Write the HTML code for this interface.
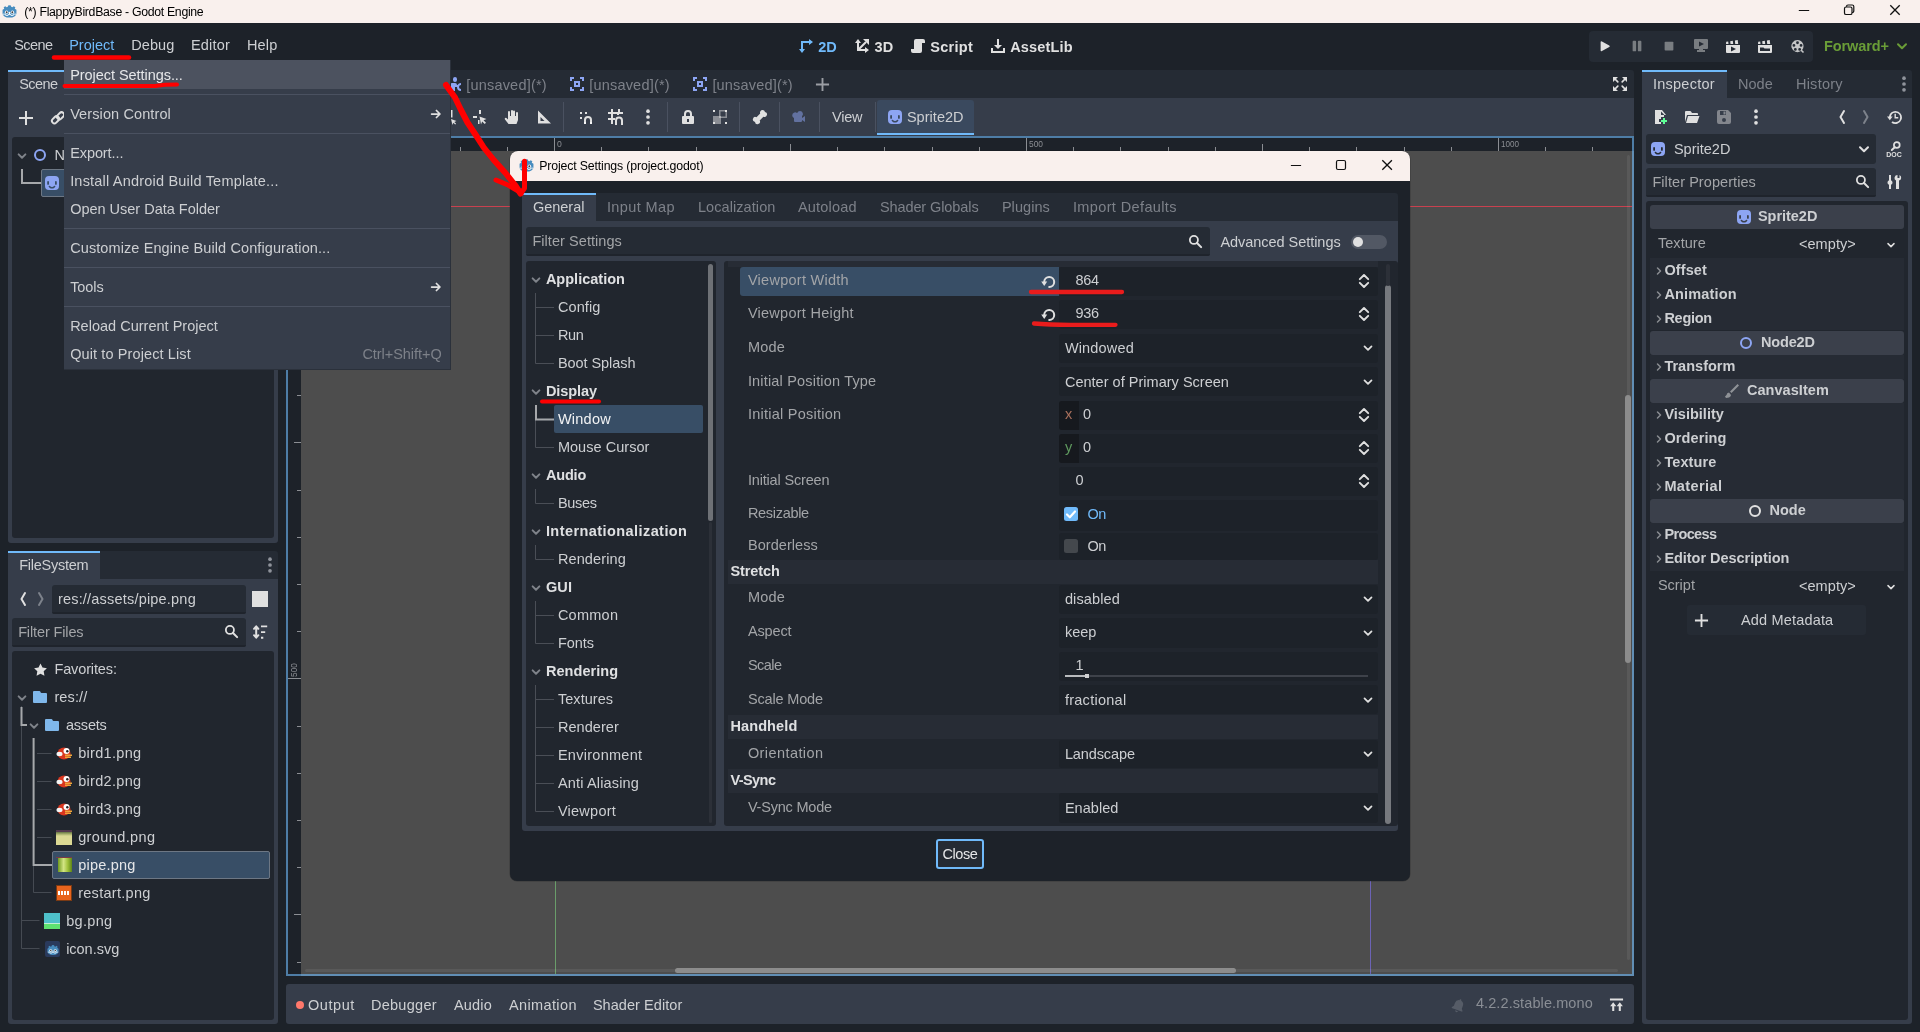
<!DOCTYPE html><html><head><meta charset="utf-8"><title>(*) FlappyBirdBase - Godot Engine</title><style>
html,body{margin:0;padding:0;background:#1d2229;}
body{width:1920px;height:1032px;position:relative;overflow:hidden;font-family:"Liberation Sans",sans-serif;color:#cdcfd2;font-size:14.5px;}
div,span.t,svg{position:absolute;}
span.t{white-space:pre;line-height:20px;}
</style></head><body><div id="root" style="left:0;top:0;width:1920px;height:1032px;will-change:transform;overflow:hidden">
<div style="left:0px;top:0px;width:1920px;height:23px;background:#f9f0ed;"></div>
<svg style="left:2.4px;top:3.5px;" width="15" height="15" viewBox="0 0 16 16"><path fill="#478cbf" d="M8 1.300l1.500.200.300 1.500 1.300.500 1.400-1.100 1.700 1.100-.600 1.600 1.800 1.100v3.300c0 3.300-3.300 5-7.400 5S.600 12.800.600 9.500V6.200l1.800-1.100-.600-1.600 1.700-1.100 1.400 1.100 1.300-.500.300-1.500z"/><circle cx="4.900" cy="8.700" r="1.800" fill="#fff"/><circle cx="11.100" cy="8.700" r="1.800" fill="#fff"/><circle cx="5" cy="8.800" r="1" fill="#414042"/><circle cx="11" cy="8.800" r="1" fill="#414042"/><rect x="7.300" y="8.300" width="1.400" height="2.400" rx=".700" fill="#fff"/><path fill="none" stroke="#fff" stroke-width=".900" d="M1 10.800h3v1.400h2.500v-1h3v1H12v-1.400h3"/></svg>
<span class="t" style="left:24.3px;top:1.74px;font-size:12.3px;letter-spacing:-0.31px;color:#000;">(*) FlappyBirdBase - Godot Engine</span>
<svg style="left:1790px;top:0" width="130" height="23" viewBox="0 0 130 23"><g fill="none" stroke="#111" stroke-width="1.200"><path stroke-width="1" d="M8.800 10.500h10.400"/><rect x="54.500" y="7" width="7.500" height="7.500" rx="1.600"/><path d="M56.500 6.800v-.300a1.500 1.500 0 0 1 1.500-1.500h4.200a1.600 1.600 0 0 1 1.600 1.600v4.400a1.500 1.500 0 0 1-1.500 1.500h-.300"/><path stroke-width="1.300" d="M100.300 5.300l9.400 9.400m0-9.400l-9.400 9.400"/></g></svg>
<span class="t" style="left:14.15px;top:34.98px;font-size:14.5px;letter-spacing:-0.57px;">Scene</span>
<span class="t" style="left:69.15px;top:34.98px;font-size:14.5px;letter-spacing:0.02px;color:#70bafa;">Project</span>
<span class="t" style="left:131.15px;top:34.98px;font-size:14.5px;letter-spacing:0.1px;">Debug</span>
<span class="t" style="left:190.9px;top:34.98px;font-size:14.5px;letter-spacing:0.19px;">Editor</span>
<span class="t" style="left:246.9px;top:34.98px;font-size:14.5px;letter-spacing:0.17px;">Help</span>
<svg style="left:798px;top:38.3px;" width="16" height="16" viewBox="0 0 16 16"><path fill="none" stroke="#70bafa" stroke-width="2" d="M4 12V4h8"/><path fill="#70bafa" d="M1 11h6l-3 4zM11 1l4 3-4 3z"/></svg>
<span class="t" style="left:818.2px;top:36.98px;font-size:14.5px;letter-spacing:0.08px;font-weight:700;color:#70bafa;">2D</span>
<svg style="left:854px;top:38.3px;" width="16" height="16" viewBox="0 0 16 16"><path fill="none" stroke="#e0e0e0" stroke-width="2" d="M4 4v8h8M4 12l8-8"/><path fill="#e0e0e0" d="M1 5l3-4 3 4zM11 9l4 3-4 3zM9 1h6v6z"/></svg>
<span class="t" style="left:874.6px;top:36.98px;font-size:14.5px;letter-spacing:0.03px;font-weight:700;color:#e0e0e0;">3D</span>
<svg style="left:910px;top:38.3px;" width="16" height="16" viewBox="0 0 16 16"><path fill="#e0e0e0" d="M6 1a2 2 0 0 0-2 2v8H1v2a2 2 0 0 0 2 2h7a2 2 0 0 0 2-2V5h3V3a2 2 0 0 0-2-2z"/></svg>
<span class="t" style="left:930.2px;top:36.98px;font-size:14.5px;letter-spacing:0.32px;font-weight:700;color:#e0e0e0;">Script</span>
<svg style="left:990px;top:38.3px;" width="16" height="16" viewBox="0 0 16 16"><path fill="#e0e0e0" d="M7 1v6H4l4 4 4-4H9V1zM1 10v5h14v-5h-2v3H3v-3z"/></svg>
<span class="t" style="left:1010.2px;top:36.98px;font-size:14.5px;letter-spacing:0.16px;font-weight:700;color:#e0e0e0;">AssetLib</span>
<div style="left:1589px;top:31px;width:224px;height:31px;background:#252b34;border-radius:4px;"></div>
<svg style="left:1596.75px;top:38.95px;" width="14.5" height="14.5" viewBox="0 0 16 16"><path d="M4 12.5a1 1 0 0 0 1.5.86l8-4.5a1 1 0 0 0 0-1.72l-8-4.5A1 1 0 0 0 4 3.5z" fill="#e0e0e0"/></svg>
<svg style="left:1630px;top:39.2px;opacity:0.45;" width="14" height="14" viewBox="0 0 16 16"><path d="M3 3a1 1 0 0 1 1-1h2a1 1 0 0 1 1 1v10a1 1 0 0 1-1 1H4a1 1 0 0 1-1-1zm6 0a1 1 0 0 1 1-1h2a1 1 0 0 1 1 1v10a1 1 0 0 1-1 1h-2a1 1 0 0 1-1-1z" fill="#e0e0e0"/></svg>
<svg style="left:1662px;top:39.2px;opacity:0.45;" width="14" height="14" viewBox="0 0 16 16"><rect x="3" y="3" width="10" height="10" rx="1" fill="#e0e0e0"/></svg>
<svg style="left:1693px;top:38.2px;opacity:0.45;" width="16" height="16" viewBox="0 0 16 16"><path fill="#e0e0e0" fill-rule="evenodd" d="M2 1a1 1 0 0 0-1 1v8a1 1 0 0 0 1 1h4v1H4v2h8v-2h-2v-1h4a1 1 0 0 0 1-1V2a1 1 0 0 0-1-1zm4 2.5l5 2.5-5 2.5z"/></svg>
<svg style="left:1725px;top:38.2px;" width="16" height="16" viewBox="0 0 16 16"><path fill="#e0e0e0" fill-rule="evenodd" d="M1 7v7a1 1 0 0 0 1 1h12a1 1 0 0 0 1-1V7zm5 1.500l5 2.500-5 2.500zM1 6h2.500L3.200 3.500l-2 .300zm4.500 0h2.700L7.800 2.800l-2.600.400zm4.700 0h3L12.700 2l-2.800.400z"/></svg>
<svg style="left:1757px;top:38.2px;" width="16" height="16" viewBox="0 0 16 16"><path fill="#e0e0e0" fill-rule="evenodd" d="M1 7v7a1 1 0 0 0 1 1h12a1 1 0 0 0 1-1V7zm2 2.500h3.500l1 1H13V13H3zM1 6h2.500L3.200 3.500l-2 .300zm4.500 0h2.700L7.800 2.800l-2.600.400zm4.700 0h3L12.700 2l-2.800.400z"/></svg>
<svg style="left:1790px;top:38.7px;opacity:0.85;" width="15" height="15" viewBox="0 0 16 16"><path fill="#e0e0e0" fill-rule="evenodd" d="M8 1a6.500 6.500 0 1 0 3.600 11.900l2.200 2.100 1.200-1.200-2.100-2.200A6.500 6.500 0 0 0 8 1zm0 1.500a1.500 1.500 0 1 1 0 3 1.500 1.500 0 0 1 0-3zM4.200 5.300a1.500 1.500 0 1 1 0 3 1.500 1.500 0 0 1 0-3zm7.600 0a1.500 1.500 0 1 1 0 3 1.500 1.500 0 0 1 0-3zM5.700 9.600a1.500 1.500 0 1 1 0 3 1.500 1.500 0 0 1 0-3zm4.600 0a1.500 1.500 0 1 1 0 3 1.500 1.500 0 0 1 0-3z"/></svg>
<span class="t" style="left:1823.9px;top:35.98px;font-size:14.5px;letter-spacing:-0.08px;font-weight:700;color:#6a9d37;">Forward+</span>
<svg style="left:1894px;top:38px;" width="16" height="16" viewBox="0 0 16 16"><path d="M4 6.2l4 4 4-4" fill="none" stroke="#6a9d37" stroke-width="2" stroke-linecap="round" stroke-linejoin="round"/></svg>
<div style="left:8px;top:70px;width:270px;height:28px;background:#252b34;border-radius:3px 3px 0 0;"></div>
<div style="left:8px;top:98px;width:270px;height:445px;background:#363d4a;border-radius:0 0 3px 3px;"></div>
<div style="left:8px;top:70px;width:60px;height:28px;background:#363d4a;"></div>
<div style="left:8px;top:70px;width:60px;height:2px;background:#70bafa;"></div>
<span class="t" style="left:19.15px;top:73.98px;font-size:14.5px;letter-spacing:-0.57px;">Scene</span>
<svg style="left:18px;top:109.5px;" width="16" height="16" viewBox="0 0 16 16"><path d="M7 1v6H1v2h6v6h2V9h6V7H9V1z" fill="#e0e0e0"/></svg>
<svg style="left:50px;top:109.5px;" width="16" height="16" viewBox="0 0 16 16"><g fill="none" stroke="#e0e0e0" stroke-width="2" stroke-linecap="round"><rect x="1.500" y="7.300" width="8" height="5" rx="2.500" transform="rotate(-45 5.500 9.800)"/><rect x="6.500" y="3.300" width="8" height="5" rx="2.500" transform="rotate(-45 10.500 5.800)"/></g></svg>
<div style="left:12px;top:137px;width:262px;height:401px;background:#21262e;border-radius:3px;"></div>
<svg style="left:16px;top:149.5px;" width="12" height="12" viewBox="0 0 16 16"><path d="M3.500 5.800l4.500 4.500 4.500-4.500" fill="none" stroke="#7f838a" stroke-width="2.600" stroke-linecap="round" stroke-linejoin="round"/></svg>
<svg style="left:32px;top:147px;" width="16" height="16" viewBox="0 0 16 16"><circle cx="8" cy="8" r="5" fill="none" stroke="#8da5f3" stroke-width="2"/></svg>
<span class="t" style="left:54.4px;top:144.98px;font-size:14.5px;letter-spacing:0.25px;">Node2D</span>
<div style="left:40.5px;top:169px;width:233px;height:28px;background:#384e66;border-radius:2px;border:1px solid #6d7784;box-sizing:border-box;"></div>
<svg style="left:12px;top:165px" width="40" height="30" viewBox="0 0 40 30"><path d="M10 4v14h19" fill="none" stroke="#a6a8ab" stroke-width="2"/></svg>
<svg style="left:44px;top:175px;" width="16" height="16" viewBox="0 0 16 16"><path fill="#8da5f3" fill-rule="evenodd" d="M5 1a4 4 0 0 0-4 4v6a4 4 0 0 0 4 4h6a4 4 0 0 0 4-4V5a4 4 0 0 0-4-4zM4.100 6a.900.900 0 0 1 .900.900v2a.900.900 0 0 1-1.800 0v-2A.900.900 0 0 1 4.100 6zm7.800 0a.900.900 0 0 1 .900.900v2a.900.900 0 0 1-1.800 0v-2a.900.900 0 0 1 .900-.900zM4.700 11.700a.750.750 0 0 1 1.300-.700c.900 1.300 3.100 1.300 4 0a.750.750 0 0 1 1.300.700c-1.500 2.500-5.100 2.500-6.600 0z"/></svg>
<span class="t" style="left:65.9px;top:172.98px;font-size:14.5px;letter-spacing:0.25px;color:#e6e7e9;">Sprite2D</span>
<div style="left:8px;top:551px;width:270px;height:28px;background:#252b34;border-radius:3px 3px 0 0;"></div>
<div style="left:8px;top:579px;width:270px;height:445px;background:#363d4a;border-radius:0 0 3px 3px;"></div>
<div style="left:8px;top:551px;width:92px;height:28px;background:#363d4a;"></div>
<div style="left:8px;top:551px;width:92px;height:2px;background:#70bafa;"></div>
<span class="t" style="left:19.15px;top:554.98px;font-size:14.5px;letter-spacing:-0.25px;">FileSystem</span>
<svg style="left:262px;top:557px;" width="16" height="16" viewBox="0 0 16 16"><circle cx="8" cy="2.200" r="1.850" fill="#8f939b"/><circle cx="8" cy="8" r="1.850" fill="#8f939b"/><circle cx="8" cy="13.800" r="1.850" fill="#8f939b"/></svg>
<svg style="left:14.5px;top:591px;" width="16" height="16" viewBox="0 0 16 16"><path d="M10 2L6.500 8l3.500 6" fill="none" stroke="#e0e0e0" stroke-width="2" stroke-linecap="round" stroke-linejoin="round"/></svg>
<svg style="left:33px;top:591px;" width="16" height="16" viewBox="0 0 16 16"><path d="M6 2L9.500 8 6 14" fill="none" stroke="#7d828b" stroke-width="2" stroke-linecap="round" stroke-linejoin="round"/></svg>
<div style="left:52px;top:585px;width:194px;height:29px;background:#252b34;border-radius:3px;"></div>
<div style="left:52px;top:612px;width:194px;height:2px;background:#1f242c;border-radius:0 0 3px 3px;"></div>
<span class="t" style="left:57.9px;top:588.98px;font-size:14.5px;letter-spacing:0.2px;">res://assets/pipe.png</span>
<div style="left:252px;top:591px;width:16px;height:16px;background:#e0e0e0;"></div>
<div style="left:12px;top:618px;width:234px;height:29px;background:#252b34;border-radius:3px;"></div>
<div style="left:12px;top:645px;width:234px;height:2px;background:#1f242c;border-radius:0 0 3px 3px;"></div>
<span class="t" style="left:18.15px;top:621.98px;font-size:14.5px;letter-spacing:-0.13px;color:#a3a5a8;">Filter Files</span>
<svg style="left:224px;top:623.7px;" width="15" height="15" viewBox="0 0 16 16"><circle cx="6.300" cy="6.300" r="4.300" fill="none" stroke="#e0e0e0" stroke-width="1.900"/><path d="M9.600 9.600l4.400 4.400" stroke="#e0e0e0" stroke-width="2.200" stroke-linecap="round"/></svg>
<svg style="left:252px;top:624px;" width="16" height="16" viewBox="0 0 16 16"><path fill="none" stroke="#e0e0e0" stroke-width="2" stroke-linecap="round" stroke-linejoin="round" d="M4.200 3v10M2 4.800L4.200 2.300 6.400 4.800M2 11.200L4.200 13.700 6.400 11.200"/><path fill="#e0e0e0" d="M9 1.500h6.200v1.800H9zm0 5.700h4.200V9H9zm0 5.600h2.300v2H9z"/></svg>
<div style="left:12px;top:651px;width:262px;height:369px;background:#21262e;border-radius:3px;"></div>
<svg style="left:12px;top:651px" width="262" height="369" viewBox="12 651 262 369"><g fill="none"><path stroke="#454a52" stroke-width="1" d="M21.500 706v242.500h18M21.500 920.500h18M33.500 738v154.500h18M37 753.500h14.500M37 781.500h14.500M37 809.500h14.500M37 837.500h14.500"/><path stroke="#a6a8ab" stroke-width="2" d="M21.500 707v18h5.500M33.600 738v127h18.400"/></g></svg>
<svg style="left:32.5px;top:662px;" width="15" height="15" viewBox="0 0 16 16"><path fill="#e0e0e0" d="M8 1.6l2.1 4.3 4.7.7-3.4 3.3.8 4.7L8 12.4l-4.2 2.2.8-4.7L1.2 6.6l4.7-.7z"/></svg>
<span class="t" style="left:54.4px;top:659.48px;font-size:14.5px;letter-spacing:-0.12px;">Favorites:</span>
<svg style="left:16.2px;top:691.5px;" width="12" height="12" viewBox="0 0 16 16"><path d="M3.500 5.800l4.500 4.500 4.500-4.500" fill="none" stroke="#7f838a" stroke-width="2.600" stroke-linecap="round" stroke-linejoin="round"/></svg>
<svg style="left:32px;top:689px;" width="16" height="16" viewBox="0 0 16 16"><path fill="#7fb7ea" d="M2 2a1 1 0 0 0-1 1v10a1 1 0 0 0 1 1h12a1 1 0 0 0 1-1V5a1 1 0 0 0-1-1H9.5a1 1 0 0 1-.8-.4l-.4-1.2A1 1 0 0 0 7.4 2z"/></svg>
<span class="t" style="left:54.4px;top:687.48px;font-size:14.5px;letter-spacing:0.13px;">res://</span>
<svg style="left:28px;top:719.5px;" width="12" height="12" viewBox="0 0 16 16"><path d="M3.500 5.800l4.500 4.500 4.500-4.500" fill="none" stroke="#7f838a" stroke-width="2.600" stroke-linecap="round" stroke-linejoin="round"/></svg>
<svg style="left:44px;top:717px;" width="16" height="16" viewBox="0 0 16 16"><path fill="#7fb7ea" d="M2 2a1 1 0 0 0-1 1v10a1 1 0 0 0 1 1h12a1 1 0 0 0 1-1V5a1 1 0 0 0-1-1H9.5a1 1 0 0 1-.8-.4l-.4-1.2A1 1 0 0 0 7.4 2z"/></svg>
<span class="t" style="left:65.9px;top:715.48px;font-size:14.5px;letter-spacing:-0.19px;">assets</span>
<div style="left:52px;top:851px;width:218px;height:28px;background:#384e66;border-radius:2px;border:1px solid #6d7784;box-sizing:border-box;"></div>
<svg style="left:56px;top:744.5px" width="17" height="16" viewBox="0 0 17 16"><ellipse cx="8" cy="8.500" rx="6.500" ry="6" fill="#d9361e"/><circle cx="10.500" cy="6" r="3" fill="#fff"/><circle cx="11.300" cy="6.200" r="1.200" fill="#222"/><ellipse cx="3.500" cy="9" rx="3" ry="2.200" fill="#f5f5f5"/><path d="M9 9.500h7v1.500H9zM9 11.500h6v1.500H9z" fill="#f0a53a"/></svg>
<span class="t" style="left:78.15px;top:743.48px;font-size:14.5px;letter-spacing:0.31px;">bird1.png</span>
<svg style="left:56px;top:772.5px" width="17" height="16" viewBox="0 0 17 16"><ellipse cx="8" cy="8.500" rx="6.500" ry="6" fill="#d9361e"/><circle cx="10.500" cy="6" r="3" fill="#fff"/><circle cx="11.300" cy="6.200" r="1.200" fill="#222"/><ellipse cx="3.500" cy="9" rx="3" ry="2.200" fill="#f5f5f5"/><path d="M9 9.500h7v1.500H9zM9 11.500h6v1.500H9z" fill="#f0a53a"/></svg>
<span class="t" style="left:78.15px;top:771.48px;font-size:14.5px;letter-spacing:0.31px;">bird2.png</span>
<svg style="left:56px;top:800.5px" width="17" height="16" viewBox="0 0 17 16"><ellipse cx="8" cy="8.500" rx="6.500" ry="6" fill="#d9361e"/><circle cx="10.500" cy="6" r="3" fill="#fff"/><circle cx="11.300" cy="6.200" r="1.200" fill="#222"/><ellipse cx="3.500" cy="9" rx="3" ry="2.200" fill="#f5f5f5"/><path d="M9 9.500h7v1.500H9zM9 11.500h6v1.500H9z" fill="#f0a53a"/></svg>
<span class="t" style="left:78.15px;top:799.48px;font-size:14.5px;letter-spacing:0.31px;">bird3.png</span>
<div style="left:56px;top:830px;width:16px;height:15.2px;background:#dcd994;"></div>
<div style="left:56px;top:830px;width:16px;height:6px;background:linear-gradient(#553a4f 0 30%,#6e7c4a 38%,#aab26e 70%,#dcd994);"></div>
<span class="t" style="left:78.15px;top:827.48px;font-size:14.5px;letter-spacing:0.39px;">ground.png</span>
<div style="left:58.4px;top:857px;width:13.6px;height:15px;background:linear-gradient(90deg,#6f9a1e,#d3e584 40%,#9fc03a 70%,#5d8417);"></div>
<div style="left:56px;top:856.5px;width:16px;height:1px;background:#7c3b45;"></div>
<span class="t" style="left:78.15px;top:855.48px;font-size:14.5px;letter-spacing:0.23px;color:#e6e7e9;">pipe.png</span>
<div style="left:56px;top:885px;width:16px;height:16px;background:#e8641d;border:1px solid #7a3a14;box-sizing:border-box;"></div>
<div style="left:58px;top:891px;width:12px;height:4px;background:repeating-linear-gradient(90deg,#fff 0 2px,#e8641d 2px 3px);"></div>
<span class="t" style="left:78.15px;top:883.48px;font-size:14.5px;letter-spacing:0.29px;">restart.png</span>
<div style="left:44px;top:912.5px;width:16px;height:16px;background:#4ec0ca;"></div>
<div style="left:44px;top:924px;width:16px;height:4.5px;background:#5ee270;"></div>
<div style="left:44px;top:923px;width:16px;height:1.2px;background:#bfeed6;"></div>
<span class="t" style="left:66.15px;top:911.48px;font-size:14.5px;letter-spacing:0.32px;">bg.png</span>
<div style="left:45px;top:941px;width:15px;height:16px;background:#2a3a5c;border-radius:2px;"></div>
<svg style="left:46.5px;top:943.5px;" width="12" height="12" viewBox="0 0 16 16"><path fill="#478cbf" d="M8 1.300l1.500.200.300 1.500 1.300.500 1.400-1.100 1.700 1.100-.600 1.600 1.800 1.100v3.300c0 3.300-3.300 5-7.400 5S.600 12.800.600 9.500V6.200l1.800-1.100-.600-1.600 1.700-1.100 1.400 1.100 1.300-.500.300-1.500z"/><circle cx="4.900" cy="8.700" r="1.800" fill="#fff"/><circle cx="11.100" cy="8.700" r="1.800" fill="#fff"/><circle cx="5" cy="8.800" r="1" fill="#414042"/><circle cx="11" cy="8.800" r="1" fill="#414042"/><rect x="7.300" y="8.300" width="1.400" height="2.400" rx=".700" fill="#fff"/><path fill="none" stroke="#fff" stroke-width=".900" d="M1 10.800h3v1.400h2.500v-1h3v1H12v-1.400h3"/></svg>
<span class="t" style="left:66.15px;top:939.48px;font-size:14.5px;letter-spacing:-0.02px;">icon.svg</span>
<div style="left:286px;top:70px;width:1348px;height:28px;background:#252b34;border-radius:3px 3px 0 0;"></div>
<div style="left:286px;top:98px;width:1348px;height:39px;background:#363d4a;"></div>
<svg style="left:448px;top:76px;" width="16" height="16" viewBox="0 0 16 16"><path fill="#8da5f3" d="M7 1a2 2 0 0 0-2 2v1a2 2 0 0 0 4 0V3a2 2 0 0 0-2-2zM4 7a2 2 0 0 0-2 2v3h2v3h3v-4h2a4 4 0 0 0 4 4v-2a2 2 0 0 1 0-4V7a4 4 0 0 0-3.500 2H9V9a2 2 0 0 0-2-2z"/></svg>
<span class="t" style="left:466.15px;top:75.48px;font-size:14.5px;letter-spacing:0.21px;color:#7d8189;">[unsaved](*)</span>
<svg style="left:569px;top:76px;" width="16" height="16" viewBox="0 0 16 16"><path fill="#8da5f3" d="M1 1v4h2V3h2V1zm10 0v2h2v2h2V1zM5 5v6h6V5zm2 2h2v2H7zm-6 4v4h4v-2H3v-2zm12 0v2h-2v2h4v-4z"/></svg>
<span class="t" style="left:589.15px;top:75.48px;font-size:14.5px;letter-spacing:0.21px;color:#7d8189;">[unsaved](*)</span>
<svg style="left:692px;top:76px;" width="16" height="16" viewBox="0 0 16 16"><path fill="#8da5f3" d="M1 1v4h2V3h2V1zm10 0v2h2v2h2V1zM5 5v6h6V5zm2 2h2v2H7zm-6 4v4h4v-2H3v-2zm12 0v2h-2v2h4v-4z"/></svg>
<span class="t" style="left:712.4px;top:75.48px;font-size:14.5px;letter-spacing:0.19px;color:#7d8189;">[unsaved](*)</span>
<svg style="left:814.5px;top:76.5px;" width="15" height="15" viewBox="0 0 16 16"><path d="M7 1v6H1v2h6v6h2V9h6V7H9V1z" fill="#9b9ea4"/></svg>
<svg style="left:1612px;top:76px;" width="16" height="16" viewBox="0 0 16 16"><path fill="#e0e0e0" d="M1 1h5L1 6zm14 0v5l-5-5zM1 15v-5l5 5zm14 0h-5l5-5z"/><path stroke="#e0e0e0" stroke-width="1.700" stroke-linecap="round" d="M2.500 2.500l3.300 3.300m7.700-3.300l-3.300 3.300m-7.700 7.700l3.300-3.300m7.700 3.300l-3.300-3.300"/></svg>
<svg style="left:448px;top:108px" width="12" height="18" viewBox="0 0 12 18"><path fill="#e0e0e0" d="M3 2h1.500v7.500H3zM3 11l5.500 2-2.200.900 1.800 1.800-.900.900-1.800-1.800-.900 2.200z"/></svg>
<svg style="left:472px;top:109px;" width="16" height="16" viewBox="0 0 16 16"><path fill="#e0e0e0" d="M7 1h2v4H7zM1 7h4v2H1zm6.500.5l7 2.500-3 1.200 2.500 2.500-1.300 1.300-2.500-2.500-1.200 3zM6 11h1.500v4H6z"/></svg>
<svg style="left:504px;top:109px;" width="16" height="16" viewBox="0 0 16 16"><path fill="#e0e0e0" d="M8 1a1 1 0 0 0-1 1v5H6V3a1 1 0 0 0-2 0v7.500L2.700 9.200a1.100 1.100 0 0 0-1.700 1.400L4.500 15h8l1.500-4V4a1 1 0 0 0-2 0v3h-1V2.500a1 1 0 0 0-2 0V7H9V2a1 1 0 0 0-1-1z"/></svg>
<svg style="left:536px;top:109px;" width="16" height="16" viewBox="0 0 16 16"><path fill="#e0e0e0" fill-rule="evenodd" d="M2 1.500v13h13zM4.500 8l4 4h-4z"/></svg>
<div style="left:563px;top:102px;width:1px;height:30px;background:#4a5160;"></div>
<div style="left:667px;top:102px;width:1px;height:30px;background:#4a5160;"></div>
<div style="left:738.5px;top:102px;width:1px;height:30px;background:#4a5160;"></div>
<div style="left:778.5px;top:102px;width:1px;height:30px;background:#4a5160;"></div>
<div style="left:818.5px;top:102px;width:1px;height:30px;background:#4a5160;"></div>
<div style="left:874.5px;top:102px;width:1px;height:30px;background:#4a5160;"></div>
<svg style="left:577px;top:109px;" width="16" height="16" viewBox="0 0 16 16"><path fill="#e0e0e0" d="M3 3h2v2H3zm0 5h2v2H3zm5-5h2v2H8zM7 15v-4a4 4 0 0 1 8 0v4h-2v-4a2 2 0 0 0-4 0v4z"/><path fill="#fff" fill-opacity=".7" d="M7 13h2v2H7zm6 0h2v2h-2z"/></svg>
<svg style="left:607.5px;top:109px;" width="16" height="16" viewBox="0 0 16 16"><path fill="#e0e0e0" d="M3 0v3H0v2h3v4H0v2h3v4h2v-4h2V9H5V5h4v1h2V5h4V3h-3V0h-2v3H5V0zM7 16v-4.500a4 4 0 0 1 8 0V16h-2v-4.500a2 2 0 0 0-4 0V16z"/></svg>
<svg style="left:640px;top:109px;" width="16" height="16" viewBox="0 0 16 16"><circle cx="8" cy="2.200" r="1.850" fill="#e0e0e0"/><circle cx="8" cy="8" r="1.850" fill="#e0e0e0"/><circle cx="8" cy="13.800" r="1.850" fill="#e0e0e0"/></svg>
<svg style="left:680px;top:109px;" width="16" height="16" viewBox="0 0 16 16"><path fill="#e0e0e0" fill-rule="evenodd" d="M8 1a4 4 0 0 0-4 4v2H3a1 1 0 0 0-1 1v6a1 1 0 0 0 1 1h10a1 1 0 0 0 1-1V8a1 1 0 0 0-1-1h-1V5a4 4 0 0 0-4-4zm0 2a2 2 0 0 1 2 2v2H6V5a2 2 0 0 1 2-2zM7 10h2v3H7z"/></svg>
<svg style="left:712px;top:109px;" width="16" height="16" viewBox="0 0 16 16"><path fill="#e0e0e0" fill-opacity=".5" d="M1 7h8v8H1z"/><path fill="none" stroke="#e0e0e0" stroke-opacity=".5" stroke-width="1.500" d="M7.750 1.750h6.500v6.500h-6.500z"/><path fill="#e0e0e0" d="M1 1h2v2H1zm12 0h2v2h-2zM1 13h2v2H1zm12 0h2v2h-2z"/></svg>
<svg style="left:752px;top:109px;" width="16" height="16" viewBox="0 0 16 16"><path fill="#e0e0e0" d="M10.5 1A2.500 2.500 0 0 0 8.200 4.500L4.500 8.200A2.500 2.500 0 1 0 3 12.900 2.500 2.500 0 1 0 7.700 11.400l3.700-3.700A2.500 2.500 0 1 0 13 3 2.500 2.500 0 0 0 10.500 1z"/></svg>
<svg style="left:791px;top:109px;opacity:0.5;" width="16" height="16" viewBox="0 0 16 16"><path fill="#8da5f3" d="M9 2a3 3 0 0 0-2.800 2H6a3 3 0 0 0-4.800 2.400A3 3 0 0 0 3 9v3a1 1 0 0 0 1 1h6a1 1 0 0 0 1-1v-1l3 2V7l-3 2V7.200A3 3 0 0 0 9 2z"/></svg>
<span class="t" style="left:831.9px;top:106.98px;font-size:14.5px;letter-spacing:-0.17px;">View</span>
<div style="left:877px;top:100px;width:97px;height:35px;background:#3a495e;border-radius:3px 3px 0 0;"></div>
<div style="left:877px;top:133px;width:97px;height:2px;background:#70bafa;"></div>
<svg style="left:886.5px;top:109px;" width="16" height="16" viewBox="0 0 16 16"><path fill="#8da5f3" fill-rule="evenodd" d="M5 1a4 4 0 0 0-4 4v6a4 4 0 0 0 4 4h6a4 4 0 0 0 4-4V5a4 4 0 0 0-4-4zM4.100 6a.900.900 0 0 1 .900.900v2a.900.900 0 0 1-1.800 0v-2A.900.900 0 0 1 4.100 6zm7.800 0a.900.900 0 0 1 .900.900v2a.900.900 0 0 1-1.800 0v-2a.900.900 0 0 1 .900-.900zM4.700 11.700a.750.750 0 0 1 1.300-.700c.900 1.300 3.100 1.300 4 0a.750.750 0 0 1 1.300.700c-1.500 2.500-5.100 2.500-6.600 0z"/></svg>
<span class="t" style="left:906.9px;top:106.98px;font-size:14.5px;letter-spacing:0.04px;">Sprite2D</span>
<div style="left:286px;top:136px;width:1348px;height:840px;background:#4d4d4d;"></div>
<div style="left:286px;top:136px;width:1348px;height:15px;background:#1d2229;"></div>
<div style="left:286px;top:136px;width:15px;height:840px;background:#1d2229;"></div>
<svg style="left:0;top:0" width="1920" height="1032" viewBox="0 0 1920 1032"><g stroke="#8b8e93" stroke-width="1" fill="none"><path d="M318.5 144v7"/><path d="M365.5 147v4"/><path d="M412.5 147v4"/><path d="M460.5 147v4"/><path d="M507.5 147v4"/><path d="M554.5 138v13"/><path d="M601.5 147v4"/><path d="M648.5 147v4"/><path d="M696.5 147v4"/><path d="M743.5 147v4"/><path d="M790.5 144v7"/><path d="M837.5 147v4"/><path d="M884.5 147v4"/><path d="M932.5 147v4"/><path d="M979.5 147v4"/><path d="M1026.5 138v13"/><path d="M1073.5 147v4"/><path d="M1120.5 147v4"/><path d="M1168.5 147v4"/><path d="M1215.5 147v4"/><path d="M1262.5 144v7"/><path d="M1309.5 147v4"/><path d="M1356.5 147v4"/><path d="M1404.5 147v4"/><path d="M1451.5 147v4"/><path d="M1498.5 138v13"/><path d="M1545.5 147v4"/><path d="M1592.5 147v4"/><path d="M297 159.5h4"/><path d="M288 206.5h13"/><path d="M297 254.5h4"/><path d="M297 301.5h4"/><path d="M297 348.5h4"/><path d="M297 395.5h4"/><path d="M294 442.5h7"/><path d="M297 490.5h4"/><path d="M297 537.5h4"/><path d="M297 584.5h4"/><path d="M297 631.5h4"/><path d="M288 678.5h13"/><path d="M297 726.5h4"/><path d="M297 773.5h4"/><path d="M297 820.5h4"/><path d="M297 867.5h4"/><path d="M294 914.5h7"/><path d="M297 962.5h4"/></g><g font-family="Liberation Sans, sans-serif" font-size="9.800" fill="#8b8e93"><text x="557" y="147" textLength="4.800" lengthAdjust="spacingAndGlyphs">0</text><text x="1029" y="147" textLength="14" lengthAdjust="spacingAndGlyphs">500</text><text x="1501" y="147" textLength="18" lengthAdjust="spacingAndGlyphs">1000</text><text transform="translate(297 677) rotate(-90)" textLength="14" lengthAdjust="spacingAndGlyphs">500</text></g></svg>
<div style="left:301px;top:206px;width:1331px;height:1px;background:#c9414f;"></div>
<div style="left:555px;top:151px;width:1px;height:823px;background:#6a9d6a;"></div>
<div style="left:1370px;top:151px;width:1px;height:823px;background:#6c63b5;"></div>
<div style="left:305px;top:968.5px;width:1313px;height:3.5px;background:rgba(255,255,255,.07);border-radius:2px;"></div>
<div style="left:675px;top:967.5px;width:561px;height:5.5px;background:#8c8c8c;border-radius:3px;"></div>
<div style="left:1626.5px;top:155px;width:3.5px;height:805px;background:rgba(255,255,255,.07);border-radius:2px;"></div>
<div style="left:1625px;top:394.5px;width:5.5px;height:268px;background:#8c8c8c;border-radius:3px;"></div>
<div style="left:286px;top:136px;width:1348px;height:840px;border:2px solid rgba(112,186,250,.6);box-sizing:border-box;"></div>
<div style="left:286px;top:984px;width:1348px;height:40px;background:#363d4a;border-radius:3px;"></div>
<div style="left:296px;top:1001px;width:8px;height:8px;background:#ff786b;border-radius:4px;"></div>
<span class="t" style="left:307.9px;top:994.98px;font-size:14.5px;letter-spacing:0.58px;">Output</span>
<span class="t" style="left:370.9px;top:994.98px;font-size:14.5px;letter-spacing:0.29px;">Debugger</span>
<span class="t" style="left:453.9px;top:994.98px;font-size:14.5px;letter-spacing:0.18px;">Audio</span>
<span class="t" style="left:508.9px;top:994.98px;font-size:14.5px;letter-spacing:0.39px;">Animation</span>
<span class="t" style="left:592.9px;top:994.98px;font-size:14.5px;letter-spacing:0.06px;">Shader Editor</span>
<svg style="left:1451px;top:997.5px;" width="15" height="15" viewBox="0 0 16 16"><path fill="#565c67" d="M8 1a1 1 0 0 0-1 1v.3A4.500 4.500 0 0 0 3.500 6.700V10L2 12v1h12v-1l-1.500-2V6.700A4.500 4.500 0 0 0 9 2.300V2a1 1 0 0 0-1-1zM6.500 14a1.500 1.500 0 0 0 3 0z" transform="rotate(20 8 8)"/></svg>
<span class="t" style="left:1475.9px;top:993.28px;font-size:14.5px;letter-spacing:0.1px;color:#8a8e95;">4.2.2.stable.mono</span>
<svg style="left:1608.5px;top:997px;" width="15" height="15" viewBox="0 0 16 16"><path fill="#e0e0e0" d="M1 1.500h14v2.200H1zM4.500 5.500L1.200 9.800h2.200V15h2.200V9.800h2.200zm7 0L8.200 9.800h2.200V15h2.200V9.800h2.200z"/></svg>
<div style="left:1642px;top:70px;width:270px;height:28px;background:#252b34;border-radius:3px 3px 0 0;"></div>
<div style="left:1642px;top:98px;width:270px;height:926px;background:#363d4a;border-radius:0 0 3px 3px;"></div>
<div style="left:1642px;top:70px;width:85px;height:28px;background:#363d4a;"></div>
<div style="left:1642px;top:70px;width:85px;height:2px;background:#70bafa;"></div>
<span class="t" style="left:1652.9px;top:73.98px;font-size:14.5px;letter-spacing:0.26px;">Inspector</span>
<span class="t" style="left:1737.9px;top:73.98px;font-size:14.5px;letter-spacing:0.08px;color:#7d8189;">Node</span>
<span class="t" style="left:1795.9px;top:73.98px;font-size:14.5px;letter-spacing:0.27px;color:#7d8189;">History</span>
<svg style="left:1896px;top:76px;" width="16" height="16" viewBox="0 0 16 16"><circle cx="8" cy="2.200" r="1.850" fill="#8f939b"/><circle cx="8" cy="8" r="1.850" fill="#8f939b"/><circle cx="8" cy="13.800" r="1.850" fill="#8f939b"/></svg>
<svg style="left:1652.5px;top:109px;" width="16" height="16" viewBox="0 0 16 16"><path fill="#e0e0e0" d="M2 1v14h6v-2H6v-3h2V8h3V6h2V6L9 1zm6 1.500L11.500 6H8z"/><path fill="#5fff97" d="M10 9v2H8v2h2v2h2v-2h2v-2h-2V9z"/></svg>
<svg style="left:1684px;top:109px;" width="16" height="16" viewBox="0 0 16 16"><path fill="#e0e0e0" d="M1 3v10l2-7h11V5a1 1 0 0 0-1-1H8L7 2.500A1 1 0 0 0 6.200 2H2a1 1 0 0 0-1 1zm3 4l-2 7h11l2.500-7z"/></svg>
<svg style="left:1716px;top:109px;opacity:0.45;" width="16" height="16" viewBox="0 0 16 16"><path fill="#e0e0e0" fill-rule="evenodd" d="M3 1a2 2 0 0 0-2 2v10a2 2 0 0 0 2 2h10a2 2 0 0 0 2-2V4l-3-3zm1 1h6v4H4zm3.500.500v3h2v-3zM8 9a2 2 0 1 1 0 4 2 2 0 0 1 0-4z"/></svg>
<svg style="left:1748px;top:109px;" width="16" height="16" viewBox="0 0 16 16"><circle cx="8" cy="2.200" r="1.850" fill="#e0e0e0"/><circle cx="8" cy="8" r="1.850" fill="#e0e0e0"/><circle cx="8" cy="13.800" r="1.850" fill="#e0e0e0"/></svg>
<svg style="left:1834px;top:109px;" width="16" height="16" viewBox="0 0 16 16"><path d="M10 2L6.500 8l3.500 6" fill="none" stroke="#e0e0e0" stroke-width="2" stroke-linecap="round" stroke-linejoin="round"/></svg>
<svg style="left:1858px;top:109px;" width="16" height="16" viewBox="0 0 16 16"><path d="M6 2L9.500 8 6 14" fill="none" stroke="#7d828b" stroke-width="2" stroke-linecap="round" stroke-linejoin="round"/></svg>
<svg style="left:1887px;top:109.5px;" width="15" height="15" viewBox="0 0 16 16"><path fill="#e0e0e0" fill-rule="evenodd" d="M9 1a7 7 0 0 0-6.900 6H0l3 4 3-4H4.100A5 5 0 1 1 9 13a5 5 0 0 1-3-1l-1.300 1.600A7 7 0 1 0 9 1zM8 4v5h4V7.500H9.500V4z"/></svg>
<div style="left:1646px;top:134px;width:230px;height:30px;background:#252b34;border-radius:3px;"></div>
<svg style="left:1650px;top:141px;" width="16" height="16" viewBox="0 0 16 16"><path fill="#8da5f3" fill-rule="evenodd" d="M5 1a4 4 0 0 0-4 4v6a4 4 0 0 0 4 4h6a4 4 0 0 0 4-4V5a4 4 0 0 0-4-4zM4.100 6a.900.900 0 0 1 .900.900v2a.900.900 0 0 1-1.800 0v-2A.900.900 0 0 1 4.100 6zm7.800 0a.900.900 0 0 1 .900.900v2a.900.900 0 0 1-1.800 0v-2a.900.900 0 0 1 .900-.900zM4.700 11.700a.750.750 0 0 1 1.300-.700c.900 1.300 3.100 1.300 4 0a.750.750 0 0 1 1.300.700c-1.500 2.500-5.100 2.500-6.600 0z"/></svg>
<span class="t" style="left:1673.9px;top:138.98px;font-size:14.5px;letter-spacing:0.01px;">Sprite2D</span>
<svg style="left:1856px;top:141px;" width="16" height="16" viewBox="0 0 16 16"><path d="M4 6.2l4 4 4-4" fill="none" stroke="#e0e0e0" stroke-width="2" stroke-linecap="round" stroke-linejoin="round"/></svg>
<svg style="left:1886px;top:141px;" width="16" height="16" viewBox="0 0 16 16"><circle cx="10.800" cy="4" r="2.900" fill="none" stroke="#e0e0e0" stroke-width="1.700"/><path d="M8.700 6.200L5.800 9" stroke="#e0e0e0" stroke-width="1.900" stroke-linecap="round"/><text x="8" y="15.700" text-anchor="middle" font-family="Liberation Sans, sans-serif" font-weight="700" font-size="7" fill="#e0e0e0" textLength="15.500" lengthAdjust="spacingAndGlyphs">DOC</text></svg>
<div style="left:1646px;top:168px;width:230px;height:29px;background:#252b34;border-radius:3px;"></div>
<div style="left:1646px;top:195px;width:230px;height:2px;background:#1f242c;border-radius:0 0 3px 3px;"></div>
<span class="t" style="left:1652.4px;top:171.98px;font-size:14.5px;letter-spacing:0.07px;color:#a3a5a8;">Filter Properties</span>
<svg style="left:1854.5px;top:173.5px;" width="15" height="15" viewBox="0 0 16 16"><circle cx="6.300" cy="6.300" r="4.300" fill="none" stroke="#e0e0e0" stroke-width="1.900"/><path d="M9.600 9.600l4.400 4.400" stroke="#e0e0e0" stroke-width="2.200" stroke-linecap="round"/></svg>
<svg style="left:1886px;top:173.5px;" width="16" height="16" viewBox="0 0 16 16"><path fill="#e0e0e0" d="M3 1v5.200a2.500 2.500 0 0 0 0 4.600V15h2v-4.200a2.500 2.500 0 0 0 0-4.600V1zm8.500 0A3 3 0 0 0 10 6.600V15h3V6.600A3 3 0 0 0 13.500 1v3h-2z" transform="translate(0 0)"/></svg>
<div style="left:1646px;top:201px;width:262px;height:819px;background:#21262e;border-radius:3px;"></div>
<div style="left:1650px;top:205px;width:254px;height:24px;background:#3b404b;border-radius:3px;"></div>
<svg style="left:1736px;top:209px;" width="16" height="16" viewBox="0 0 16 16"><path fill="#8da5f3" fill-rule="evenodd" d="M5 1a4 4 0 0 0-4 4v6a4 4 0 0 0 4 4h6a4 4 0 0 0 4-4V5a4 4 0 0 0-4-4zM4.100 6a.900.900 0 0 1 .900.900v2a.900.900 0 0 1-1.800 0v-2A.900.900 0 0 1 4.100 6zm7.800 0a.900.900 0 0 1 .900.900v2a.900.900 0 0 1-1.800 0v-2a.900.900 0 0 1 .900-.900zM4.700 11.700a.750.750 0 0 1 1.300-.700c.900 1.300 3.100 1.300 4 0a.750.750 0 0 1 1.300.700c-1.500 2.500-5.100 2.500-6.600 0z"/></svg>
<span class="t" style="left:1757.9px;top:206.28px;font-size:14.5px;letter-spacing:-0.02px;font-weight:700;">Sprite2D</span>
<span class="t" style="left:1657.9px;top:232.98px;font-size:14.5px;letter-spacing:0.06px;color:#a3a5a8;">Texture</span>
<span class="t" style="left:1798.9px;top:233.98px;font-size:14.5px;letter-spacing:0.08px;">&lt;empty&gt;</span>
<svg style="left:1885px;top:239px;" width="12" height="12" viewBox="0 0 16 16"><path d="M4 6.2l4 4 4-4" fill="none" stroke="#e0e0e0" stroke-width="2" stroke-linecap="round" stroke-linejoin="round"/></svg>
<div style="left:1650px;top:258px;width:254px;height:24px;background:#262b34;"></div>
<svg style="left:1652.5px;top:264.5px;" width="12" height="12" viewBox="0 0 16 16"><path d="M6 4l4 4-4 4" fill="none" stroke="#8a8d92" stroke-width="2" stroke-linecap="round" stroke-linejoin="round"/></svg>
<span class="t" style="left:1664.4px;top:259.98px;font-size:14.5px;letter-spacing:0.1px;font-weight:700;">Offset</span>
<div style="left:1650px;top:282px;width:254px;height:24px;background:#262b34;"></div>
<svg style="left:1652.5px;top:288.5px;" width="12" height="12" viewBox="0 0 16 16"><path d="M6 4l4 4-4 4" fill="none" stroke="#8a8d92" stroke-width="2" stroke-linecap="round" stroke-linejoin="round"/></svg>
<span class="t" style="left:1664.4px;top:283.98px;font-size:14.5px;letter-spacing:0.18px;font-weight:700;">Animation</span>
<div style="left:1650px;top:306px;width:254px;height:24px;background:#262b34;"></div>
<svg style="left:1652.5px;top:312.5px;" width="12" height="12" viewBox="0 0 16 16"><path d="M6 4l4 4-4 4" fill="none" stroke="#8a8d92" stroke-width="2" stroke-linecap="round" stroke-linejoin="round"/></svg>
<span class="t" style="left:1664.4px;top:307.98px;font-size:14.5px;letter-spacing:-0.27px;font-weight:700;">Region</span>
<div style="left:1650px;top:330.5px;width:254px;height:24px;background:#3b404b;border-radius:3px;"></div>
<svg style="left:1738px;top:334.5px;" width="16" height="16" viewBox="0 0 16 16"><circle cx="8" cy="8" r="5" fill="none" stroke="#8da5f3" stroke-width="2"/></svg>
<span class="t" style="left:1760.9px;top:331.78px;font-size:14.5px;letter-spacing:-0.13px;font-weight:700;">Node2D</span>
<div style="left:1650px;top:354.5px;width:254px;height:24px;background:#262b34;"></div>
<svg style="left:1652.5px;top:361px;" width="12" height="12" viewBox="0 0 16 16"><path d="M6 4l4 4-4 4" fill="none" stroke="#8a8d92" stroke-width="2" stroke-linecap="round" stroke-linejoin="round"/></svg>
<span class="t" style="left:1664.4px;top:356.48px;font-size:14.5px;letter-spacing:0.01px;font-weight:700;">Transform</span>
<div style="left:1650px;top:378.5px;width:254px;height:24px;background:#3b404b;border-radius:3px;"></div>
<svg style="left:1724px;top:382.5px;" width="16" height="16" viewBox="0 0 16 16"><path fill="#8f9297" d="M13.500 1L6 8.500 7.500 10 15 2.500zM5 9.500a3 3 0 0 0-2.500 2.500L1 13.500l1 1.500 3-.5a3 3 0 0 0 2-2.500z"/></svg>
<span class="t" style="left:1746.9px;top:379.78px;font-size:14.5px;letter-spacing:0.06px;font-weight:700;">CanvasItem</span>
<div style="left:1650px;top:402.5px;width:254px;height:24px;background:#262b34;"></div>
<svg style="left:1652.5px;top:409px;" width="12" height="12" viewBox="0 0 16 16"><path d="M6 4l4 4-4 4" fill="none" stroke="#8a8d92" stroke-width="2" stroke-linecap="round" stroke-linejoin="round"/></svg>
<span class="t" style="left:1664.4px;top:404.48px;font-size:14.5px;letter-spacing:0.01px;font-weight:700;">Visibility</span>
<div style="left:1650px;top:426.5px;width:254px;height:24px;background:#262b34;"></div>
<svg style="left:1652.5px;top:433px;" width="12" height="12" viewBox="0 0 16 16"><path d="M6 4l4 4-4 4" fill="none" stroke="#8a8d92" stroke-width="2" stroke-linecap="round" stroke-linejoin="round"/></svg>
<span class="t" style="left:1664.4px;top:428.48px;font-size:14.5px;letter-spacing:0.1px;font-weight:700;">Ordering</span>
<div style="left:1650px;top:450.5px;width:254px;height:24px;background:#262b34;"></div>
<svg style="left:1652.5px;top:457px;" width="12" height="12" viewBox="0 0 16 16"><path d="M6 4l4 4-4 4" fill="none" stroke="#8a8d92" stroke-width="2" stroke-linecap="round" stroke-linejoin="round"/></svg>
<span class="t" style="left:1664.4px;top:452.48px;font-size:14.5px;letter-spacing:0.1px;font-weight:700;">Texture</span>
<div style="left:1650px;top:474.5px;width:254px;height:24px;background:#262b34;"></div>
<svg style="left:1652.5px;top:481px;" width="12" height="12" viewBox="0 0 16 16"><path d="M6 4l4 4-4 4" fill="none" stroke="#8a8d92" stroke-width="2" stroke-linecap="round" stroke-linejoin="round"/></svg>
<span class="t" style="left:1664.4px;top:476.48px;font-size:14.5px;letter-spacing:0.4px;font-weight:700;">Material</span>
<div style="left:1650px;top:498.5px;width:254px;height:24px;background:#3b404b;border-radius:3px;"></div>
<svg style="left:1747px;top:502.5px;" width="16" height="16" viewBox="0 0 16 16"><circle cx="8" cy="8" r="5" fill="none" stroke="#e0e0e0" stroke-width="2"/></svg>
<span class="t" style="left:1769.4px;top:499.78px;font-size:14.5px;letter-spacing:0.06px;font-weight:700;">Node</span>
<div style="left:1650px;top:522.5px;width:254px;height:24px;background:#262b34;"></div>
<svg style="left:1652.5px;top:529px;" width="12" height="12" viewBox="0 0 16 16"><path d="M6 4l4 4-4 4" fill="none" stroke="#8a8d92" stroke-width="2" stroke-linecap="round" stroke-linejoin="round"/></svg>
<span class="t" style="left:1664.4px;top:524.48px;font-size:14.5px;letter-spacing:-0.63px;font-weight:700;">Process</span>
<div style="left:1650px;top:546.5px;width:254px;height:24px;background:#262b34;"></div>
<svg style="left:1652.5px;top:553px;" width="12" height="12" viewBox="0 0 16 16"><path d="M6 4l4 4-4 4" fill="none" stroke="#8a8d92" stroke-width="2" stroke-linecap="round" stroke-linejoin="round"/></svg>
<span class="t" style="left:1664.4px;top:548.48px;font-size:14.5px;letter-spacing:-0.04px;font-weight:700;">Editor Description</span>
<span class="t" style="left:1657.9px;top:574.98px;font-size:14.5px;letter-spacing:-0.01px;color:#a3a5a8;">Script</span>
<span class="t" style="left:1798.9px;top:575.98px;font-size:14.5px;letter-spacing:0.08px;">&lt;empty&gt;</span>
<svg style="left:1885px;top:581px;" width="12" height="12" viewBox="0 0 16 16"><path d="M4 6.2l4 4 4-4" fill="none" stroke="#e0e0e0" stroke-width="2" stroke-linecap="round" stroke-linejoin="round"/></svg>
<div style="left:1687px;top:605px;width:179px;height:30px;background:#252b34;border-radius:3px;"></div>
<svg style="left:1693.5px;top:612.5px;" width="15" height="15" viewBox="0 0 16 16"><path d="M7 1v6H1v2h6v6h2V9h6V7H9V1z" fill="#e0e0e0"/></svg>
<span class="t" style="left:1740.9px;top:609.98px;font-size:14.5px;letter-spacing:0.18px;">Add Metadata</span>
<div style="left:64px;top:60px;width:387px;height:310px;background:#363d4a;border-right:1px solid #2b313b;border-bottom:1px solid #2b313b;box-sizing:border-box;"></div>
<div style="left:64px;top:60px;width:386px;height:28.7px;background:#4c525f;"></div>
<span class="t" style="left:70.15px;top:64.98px;font-size:14.5px;letter-spacing:-0.05px;color:#e6e7e9;">Project Settings...</span>
<div style="left:64px;top:94px;width:386px;height:1px;background:#4a5160;"></div>
<div style="left:64px;top:133px;width:386px;height:1px;background:#4a5160;"></div>
<div style="left:64px;top:228px;width:386px;height:1px;background:#4a5160;"></div>
<div style="left:64px;top:267px;width:386px;height:1px;background:#4a5160;"></div>
<div style="left:64px;top:306px;width:386px;height:1px;background:#4a5160;"></div>
<span class="t" style="left:70.15px;top:103.98px;font-size:14.5px;letter-spacing:0.11px;">Version Control</span>
<span class="t" style="left:70.15px;top:142.98px;font-size:14.5px;letter-spacing:-0.08px;">Export...</span>
<span class="t" style="left:70.15px;top:170.98px;font-size:14.5px;letter-spacing:0.2px;">Install Android Build Template...</span>
<span class="t" style="left:70.15px;top:198.98px;font-size:14.5px;letter-spacing:-0.01px;">Open User Data Folder</span>
<span class="t" style="left:70.15px;top:237.98px;font-size:14.5px;letter-spacing:0.1px;">Customize Engine Build Configuration...</span>
<span class="t" style="left:70.15px;top:276.98px;font-size:14.5px;letter-spacing:-0.08px;">Tools</span>
<span class="t" style="left:70.15px;top:315.98px;font-size:14.5px;letter-spacing:0.01px;">Reload Current Project</span>
<span class="t" style="left:70.15px;top:343.98px;font-size:14.5px;letter-spacing:0.11px;">Quit to Project List</span>
<span class="t" style="left:362.4px;top:343.98px;font-size:14.5px;letter-spacing:-0.04px;color:#7d8189;">Ctrl+Shift+Q</span>
<svg style="left:428.5px;top:107px;" width="14" height="14" viewBox="0 0 16 16"><path d="M3 8h9M8.5 4l4 4-4 4" fill="none" stroke="#e0e0e0" stroke-width="2" stroke-linecap="round" stroke-linejoin="round"/></svg>
<svg style="left:428.5px;top:280px;" width="14" height="14" viewBox="0 0 16 16"><path d="M3 8h9M8.5 4l4 4-4 4" fill="none" stroke="#e0e0e0" stroke-width="2" stroke-linecap="round" stroke-linejoin="round"/></svg>
<div style="left:510px;top:151px;width:900px;height:730px;background:#1d2229;border-radius:8px 8px 7px 7px;box-shadow:0 0 0 .5px rgba(0,0,0,.25);"></div>
<div style="left:510px;top:151px;width:900px;height:30px;background:#f9f0ed;border-radius:8px 8px 0 0;"></div>
<svg style="left:518.5px;top:157.5px;" width="15" height="15" viewBox="0 0 16 16"><path fill="#478cbf" d="M8 1.300l1.500.200.300 1.500 1.300.500 1.400-1.100 1.700 1.100-.600 1.600 1.800 1.100v3.300c0 3.300-3.300 5-7.400 5S.600 12.800.600 9.500V6.200l1.800-1.100-.600-1.600 1.700-1.100 1.400 1.100 1.300-.500.300-1.500z"/><circle cx="4.900" cy="8.700" r="1.800" fill="#fff"/><circle cx="11.100" cy="8.700" r="1.800" fill="#fff"/><circle cx="5" cy="8.800" r="1" fill="#414042"/><circle cx="11" cy="8.800" r="1" fill="#414042"/><rect x="7.300" y="8.300" width="1.400" height="2.400" rx=".700" fill="#fff"/><path fill="none" stroke="#fff" stroke-width=".900" d="M1 10.800h3v1.400h2.500v-1h3v1H12v-1.400h3"/></svg>
<span class="t" style="left:539.2px;top:156.24px;font-size:12.3px;letter-spacing:-0.14px;color:#000;">Project Settings (project.godot)</span>
<svg style="left:1280px;top:151px" width="130" height="30" viewBox="0 0 130 30"><g fill="none" stroke="#111" stroke-width="1.200"><path stroke-width="1" d="M10.900 14.500h10.200"/><rect x="56.500" y="9.500" width="9" height="9" rx="1.500"/><path stroke-width="1.300" d="M102.300 9.200l9.600 9.600m0-9.600l-9.600 9.600"/></g></svg>
<div style="left:522px;top:193px;width:876px;height:28px;background:#252b34;border-radius:3px 3px 0 0;"></div>
<div style="left:522px;top:221px;width:876px;height:610px;background:#363d4a;border-radius:0 0 3px 3px;"></div>
<div style="left:522px;top:193px;width:74px;height:28px;background:#363d4a;"></div>
<div style="left:522px;top:193px;width:74px;height:2px;background:#70bafa;"></div>
<span class="t" style="left:532.9px;top:196.98px;font-size:14.5px;letter-spacing:-0.01px;">General</span>
<span class="t" style="left:606.9px;top:196.98px;font-size:14.5px;letter-spacing:0.39px;color:#7d8189;">Input Map</span>
<span class="t" style="left:697.9px;top:196.98px;font-size:14.5px;letter-spacing:0.08px;color:#7d8189;">Localization</span>
<span class="t" style="left:797.9px;top:196.98px;font-size:14.5px;letter-spacing:0.22px;color:#7d8189;">Autoload</span>
<span class="t" style="left:879.9px;top:196.98px;font-size:14.5px;letter-spacing:-0.09px;color:#7d8189;">Shader Globals</span>
<span class="t" style="left:1001.9px;top:196.98px;font-size:14.5px;letter-spacing:0.06px;color:#7d8189;">Plugins</span>
<span class="t" style="left:1072.9px;top:196.98px;font-size:14.5px;letter-spacing:0.38px;color:#7d8189;">Import Defaults</span>
<div style="left:526px;top:227px;width:684px;height:29px;background:#252b34;border-radius:3px;"></div>
<div style="left:526px;top:254px;width:684px;height:2px;background:#1f242c;border-radius:0 0 3px 3px;"></div>
<span class="t" style="left:532.4px;top:230.98px;font-size:14.5px;letter-spacing:0.06px;color:#a3a5a8;">Filter Settings</span>
<svg style="left:1188px;top:233.5px;" width="15" height="15" viewBox="0 0 16 16"><circle cx="6.300" cy="6.300" r="4.300" fill="none" stroke="#e0e0e0" stroke-width="1.900"/><path d="M9.600 9.600l4.400 4.400" stroke="#e0e0e0" stroke-width="2.200" stroke-linecap="round"/></svg>
<span class="t" style="left:1220.4px;top:231.98px;font-size:14.5px;letter-spacing:-0.04px;">Advanced Settings</span>
<div style="left:1351.3px;top:235.2px;width:35.7px;height:13.8px;background:#525864;border-radius:7px;"></div>
<div style="left:1353px;top:237.2px;width:10px;height:10px;background:#e0e0e0;border-radius:5px;"></div>
<div style="left:526px;top:261px;width:190px;height:565px;background:#21262e;border-radius:3px;"></div>
<div style="left:707.5px;top:264px;width:5px;height:257px;background:#6e7176;border-radius:3px;"></div>
<div style="left:708.5px;top:522px;width:3.5px;height:301px;background:#2c3038;border-radius:2px;"></div>
<svg style="left:530px;top:273.5px;" width="12" height="12" viewBox="0 0 16 16"><path d="M3.500 5.800l4.500 4.500 4.500-4.500" fill="none" stroke="#7f838a" stroke-width="2.600" stroke-linecap="round" stroke-linejoin="round"/></svg>
<span class="t" style="left:545.9px;top:268.98px;font-size:14.5px;letter-spacing:0.01px;font-weight:700;color:#dfe0e2;">Application</span>
<span class="t" style="left:557.9px;top:296.98px;font-size:14.5px;letter-spacing:0.1px;">Config</span>
<span class="t" style="left:557.9px;top:324.98px;font-size:14.5px;letter-spacing:-0.28px;">Run</span>
<span class="t" style="left:557.9px;top:352.98px;font-size:14.5px;letter-spacing:-0.06px;">Boot Splash</span>
<svg style="left:530px;top:385.5px;" width="12" height="12" viewBox="0 0 16 16"><path d="M3.500 5.800l4.500 4.500 4.500-4.500" fill="none" stroke="#7f838a" stroke-width="2.600" stroke-linecap="round" stroke-linejoin="round"/></svg>
<span class="t" style="left:545.9px;top:380.98px;font-size:14.5px;letter-spacing:-0.08px;font-weight:700;color:#dfe0e2;">Display</span>
<div style="left:554px;top:405px;width:149px;height:28px;background:#384e66;border-radius:2px;"></div>
<span class="t" style="left:557.9px;top:408.98px;font-size:14.5px;letter-spacing:0.24px;color:#f2f3f4;">Window</span>
<span class="t" style="left:557.9px;top:436.98px;font-size:14.5px;letter-spacing:0.04px;">Mouse Cursor</span>
<svg style="left:530px;top:469.5px;" width="12" height="12" viewBox="0 0 16 16"><path d="M3.500 5.800l4.500 4.500 4.500-4.500" fill="none" stroke="#7f838a" stroke-width="2.600" stroke-linecap="round" stroke-linejoin="round"/></svg>
<span class="t" style="left:545.9px;top:464.98px;font-size:14.5px;letter-spacing:-0.16px;font-weight:700;color:#dfe0e2;">Audio</span>
<span class="t" style="left:557.9px;top:492.98px;font-size:14.5px;letter-spacing:-0.32px;">Buses</span>
<svg style="left:530px;top:525.5px;" width="12" height="12" viewBox="0 0 16 16"><path d="M3.500 5.800l4.500 4.500 4.500-4.500" fill="none" stroke="#7f838a" stroke-width="2.600" stroke-linecap="round" stroke-linejoin="round"/></svg>
<span class="t" style="left:545.9px;top:520.98px;font-size:14.5px;letter-spacing:0.43px;font-weight:700;color:#dfe0e2;">Internationalization</span>
<span class="t" style="left:557.9px;top:548.98px;font-size:14.5px;letter-spacing:0.12px;">Rendering</span>
<svg style="left:530px;top:581.5px;" width="12" height="12" viewBox="0 0 16 16"><path d="M3.500 5.800l4.500 4.500 4.500-4.500" fill="none" stroke="#7f838a" stroke-width="2.600" stroke-linecap="round" stroke-linejoin="round"/></svg>
<span class="t" style="left:545.9px;top:576.98px;font-size:14.5px;letter-spacing:0.17px;font-weight:700;color:#dfe0e2;">GUI</span>
<span class="t" style="left:557.9px;top:604.98px;font-size:14.5px;letter-spacing:0.25px;">Common</span>
<span class="t" style="left:557.9px;top:632.98px;font-size:14.5px;letter-spacing:-0.05px;">Fonts</span>
<svg style="left:530px;top:665.5px;" width="12" height="12" viewBox="0 0 16 16"><path d="M3.500 5.800l4.500 4.500 4.500-4.500" fill="none" stroke="#7f838a" stroke-width="2.600" stroke-linecap="round" stroke-linejoin="round"/></svg>
<span class="t" style="left:545.9px;top:660.98px;font-size:14.5px;letter-spacing:0.07px;font-weight:700;color:#dfe0e2;">Rendering</span>
<span class="t" style="left:557.9px;top:688.98px;font-size:14.5px;letter-spacing:0.06px;">Textures</span>
<span class="t" style="left:557.9px;top:716.98px;font-size:14.5px;letter-spacing:0.07px;">Renderer</span>
<span class="t" style="left:557.9px;top:744.98px;font-size:14.5px;letter-spacing:0.28px;">Environment</span>
<span class="t" style="left:557.9px;top:772.98px;font-size:14.5px;letter-spacing:0.17px;">Anti Aliasing</span>
<span class="t" style="left:557.9px;top:800.98px;font-size:14.5px;letter-spacing:0.26px;">Viewport</span>
<svg style="left:0;top:0" width="1920" height="1032" viewBox="0 0 1920 1032"><g fill="none" stroke="#4a4e56" stroke-width="1"><path d="M535.500 293V363.5"/><path d="M535.500 307.5H554"/><path d="M535.500 335.5H554"/><path d="M535.500 363.5H554"/><path d="M535.500 405V447.5"/><path d="M535.500 419.5H554"/><path d="M535.500 447.5H554"/><path d="M535.500 489V503.5"/><path d="M535.500 503.5H554"/><path d="M535.500 545V559.5"/><path d="M535.500 559.5H554"/><path d="M535.500 601V643.5"/><path d="M535.500 615.5H554"/><path d="M535.500 643.5H554"/><path d="M535.500 685V811.5"/><path d="M535.500 699.5H554"/><path d="M535.500 727.5H554"/><path d="M535.500 755.5H554"/><path d="M535.500 783.5H554"/><path d="M535.500 811.5H554"/></g><path d="M536 405v14.500h18" fill="none" stroke="#a6a8ab" stroke-width="2"/></svg>
<div style="left:724px;top:261px;width:674px;height:565px;background:#21262e;border-radius:3px;"></div>
<div style="left:728px;top:261px;width:650px;height:6px;background:#272c35;"></div>
<div style="left:1385px;top:285px;width:5.5px;height:539px;background:#76797e;border-radius:3px;"></div>
<div style="left:1386px;top:264px;width:3.5px;height:22px;background:#2c3038;border-radius:2px;"></div>
<div style="left:740px;top:267px;width:319px;height:29px;background:#384e66;border-radius:3px 0 0 3px;"></div>
<span class="t" style="left:747.9px;top:269.98px;font-size:14.5px;letter-spacing:0.27px;color:#a3a5a8;">Viewport Width</span>
<div style="left:1059px;top:267px;width:319px;height:29px;background:#1d2229;border-radius:3px;"></div>
<svg style="left:1041px;top:273.5px;" width="16" height="16" viewBox="0 0 16 16"><path fill="none" stroke="#e0e0e0" stroke-width="2" stroke-linecap="round" d="M3.200 8.100A5 5 0 1 1 8.200 13.100"/><path fill="#e0e0e0" d="M.200 7.600h6l-3 4.300z"/></svg>
<span class="t" style="left:1075.4px;top:269.98px;font-size:14.5px;letter-spacing:-0.31px;">864</span>
<svg style="left:1356px;top:273px;" width="16" height="16" viewBox="0 0 16 16"><path d="M3.800 6.200L8 2 12.200 6.200M3.800 9.800L8 14 12.200 9.800" fill="none" stroke="#e0e0e0" stroke-width="1.900" stroke-linecap="round" stroke-linejoin="round"/></svg>
<span class="t" style="left:747.9px;top:302.98px;font-size:14.5px;letter-spacing:0.26px;color:#a3a5a8;">Viewport Height</span>
<div style="left:1059px;top:300px;width:319px;height:29px;background:#1d2229;border-radius:3px;"></div>
<svg style="left:1041px;top:306.5px;" width="16" height="16" viewBox="0 0 16 16"><path fill="none" stroke="#e0e0e0" stroke-width="2" stroke-linecap="round" d="M3.200 8.100A5 5 0 1 1 8.200 13.100"/><path fill="#e0e0e0" d="M.200 7.600h6l-3 4.300z"/></svg>
<span class="t" style="left:1075.4px;top:302.98px;font-size:14.5px;letter-spacing:-0.31px;">936</span>
<svg style="left:1356px;top:306px;" width="16" height="16" viewBox="0 0 16 16"><path d="M3.800 6.200L8 2 12.200 6.200M3.800 9.800L8 14 12.200 9.800" fill="none" stroke="#e0e0e0" stroke-width="1.900" stroke-linecap="round" stroke-linejoin="round"/></svg>
<span class="t" style="left:747.9px;top:336.98px;font-size:14.5px;letter-spacing:0.18px;color:#a3a5a8;">Mode</span>
<div style="left:1059px;top:334px;width:319px;height:29px;background:#1d2229;border-radius:3px;"></div>
<span class="t" style="left:1064.9px;top:337.98px;font-size:14.5px;letter-spacing:0.16px;">Windowed</span>
<svg style="left:1361px;top:340.5px;" width="14" height="14" viewBox="0 0 16 16"><path d="M4 6.2l4 4 4-4" fill="none" stroke="#e0e0e0" stroke-width="2" stroke-linecap="round" stroke-linejoin="round"/></svg>
<span class="t" style="left:747.9px;top:370.98px;font-size:14.5px;letter-spacing:0.18px;color:#a3a5a8;">Initial Position Type</span>
<div style="left:1059px;top:367px;width:319px;height:29px;background:#1d2229;border-radius:3px;"></div>
<span class="t" style="left:1064.9px;top:371.98px;font-size:14.5px;letter-spacing:0.02px;">Center of Primary Screen</span>
<svg style="left:1361px;top:375px;" width="14" height="14" viewBox="0 0 16 16"><path d="M4 6.2l4 4 4-4" fill="none" stroke="#e0e0e0" stroke-width="2" stroke-linecap="round" stroke-linejoin="round"/></svg>
<span class="t" style="left:747.9px;top:403.98px;font-size:14.5px;letter-spacing:0.25px;color:#a3a5a8;">Initial Position</span>
<div style="left:1059px;top:401px;width:319px;height:29px;background:#1d2229;border-radius:3px;"></div>
<div style="left:1059px;top:401px;width:20px;height:29px;background:#16191e;border-radius:3px 0 0 3px;"></div>
<span class="t" style="left:1064.9px;top:403.98px;font-size:14.5px;letter-spacing:0.25px;color:#a9705c;">x</span>
<span class="t" style="left:1082.9px;top:403.98px;font-size:14.5px;letter-spacing:0.25px;">0</span>
<svg style="left:1356px;top:407px;" width="16" height="16" viewBox="0 0 16 16"><path d="M3.800 6.200L8 2 12.200 6.200M3.800 9.800L8 14 12.200 9.800" fill="none" stroke="#e0e0e0" stroke-width="1.900" stroke-linecap="round" stroke-linejoin="round"/></svg>
<div style="left:1059px;top:434px;width:319px;height:29px;background:#1d2229;border-radius:3px;"></div>
<div style="left:1059px;top:434px;width:20px;height:29px;background:#16191e;border-radius:3px 0 0 3px;"></div>
<span class="t" style="left:1064.9px;top:436.98px;font-size:14.5px;letter-spacing:0.25px;color:#5f9a5f;">y</span>
<span class="t" style="left:1082.9px;top:436.98px;font-size:14.5px;letter-spacing:0.25px;">0</span>
<svg style="left:1356px;top:440px;" width="16" height="16" viewBox="0 0 16 16"><path d="M3.800 6.200L8 2 12.200 6.200M3.800 9.800L8 14 12.200 9.800" fill="none" stroke="#e0e0e0" stroke-width="1.900" stroke-linecap="round" stroke-linejoin="round"/></svg>
<span class="t" style="left:747.9px;top:469.98px;font-size:14.5px;letter-spacing:-0.17px;color:#a3a5a8;">Initial Screen</span>
<div style="left:1059px;top:467px;width:319px;height:29px;background:#1d2229;border-radius:3px;"></div>
<span class="t" style="left:1075.4px;top:469.98px;font-size:14.5px;letter-spacing:0.25px;">0</span>
<svg style="left:1356px;top:473px;" width="16" height="16" viewBox="0 0 16 16"><path d="M3.800 6.200L8 2 12.200 6.200M3.800 9.800L8 14 12.200 9.800" fill="none" stroke="#e0e0e0" stroke-width="1.900" stroke-linecap="round" stroke-linejoin="round"/></svg>
<span class="t" style="left:747.9px;top:502.98px;font-size:14.5px;letter-spacing:-0.3px;color:#a3a5a8;">Resizable</span>
<div style="left:1059px;top:500px;width:319px;height:31px;background:#1d2229;border-radius:3px;"></div>
<svg style="left:1063px;top:506px;" width="16" height="16" viewBox="0 0 16 16"><rect x="1" y="1" width="14" height="14" rx="2.500" fill="#70bafa"/><path d="M4 8.500l2.800 2.800L12 5.500" fill="none" stroke="#fff" stroke-width="2.200" stroke-linecap="round" stroke-linejoin="round"/></svg>
<span class="t" style="left:1087.4px;top:503.98px;font-size:14.5px;letter-spacing:-0.42px;color:#70bafa;">On</span>
<span class="t" style="left:747.9px;top:534.98px;font-size:14.5px;letter-spacing:0.07px;color:#a3a5a8;">Borderless</span>
<div style="left:1059px;top:532.5px;width:319px;height:27px;background:#1d2229;border-radius:3px;"></div>
<svg style="left:1063px;top:538px;" width="16" height="16" viewBox="0 0 16 16"><rect x="1" y="1" width="14" height="14" rx="2.500" fill="#e0e0e0" fill-opacity=".2"/></svg>
<span class="t" style="left:1087.4px;top:535.98px;font-size:14.5px;letter-spacing:-0.42px;">On</span>
<div style="left:728px;top:560px;width:650px;height:24px;background:#272c35;"></div>
<span class="t" style="left:730.4px;top:560.98px;font-size:14.5px;letter-spacing:-0.07px;font-weight:700;color:#dfe0e2;">Stretch</span>
<span class="t" style="left:747.9px;top:587.48px;font-size:14.5px;letter-spacing:0.18px;color:#a3a5a8;">Mode</span>
<div style="left:1059px;top:584.5px;width:319px;height:29.5px;background:#1d2229;border-radius:3px;"></div>
<span class="t" style="left:1064.9px;top:588.98px;font-size:14.5px;letter-spacing:0.12px;">disabled</span>
<svg style="left:1361px;top:591.5px;" width="14" height="14" viewBox="0 0 16 16"><path d="M4 6.2l4 4 4-4" fill="none" stroke="#e0e0e0" stroke-width="2" stroke-linecap="round" stroke-linejoin="round"/></svg>
<span class="t" style="left:747.9px;top:620.98px;font-size:14.5px;letter-spacing:-0.14px;color:#a3a5a8;">Aspect</span>
<div style="left:1059px;top:618px;width:319px;height:29.5px;background:#1d2229;border-radius:3px;"></div>
<span class="t" style="left:1064.9px;top:622.48px;font-size:14.5px;letter-spacing:0.01px;">keep</span>
<svg style="left:1361px;top:625.5px;" width="14" height="14" viewBox="0 0 16 16"><path d="M4 6.2l4 4 4-4" fill="none" stroke="#e0e0e0" stroke-width="2" stroke-linecap="round" stroke-linejoin="round"/></svg>
<span class="t" style="left:747.9px;top:654.98px;font-size:14.5px;letter-spacing:-0.55px;color:#a3a5a8;">Scale</span>
<div style="left:1059px;top:652px;width:319px;height:28.5px;background:#1d2229;border-radius:3px;"></div>
<span class="t" style="left:1075.4px;top:654.98px;font-size:14.5px;letter-spacing:0.25px;">1</span>
<div style="left:1065px;top:675px;width:303px;height:2px;background:#3e424a;"></div>
<div style="left:1065px;top:675px;width:21px;height:2px;background:#b9bbbe;"></div>
<div style="left:1085px;top:674px;width:4px;height:4px;background:#d0d1d3;"></div>
<span class="t" style="left:747.9px;top:688.98px;font-size:14.5px;letter-spacing:-0.16px;color:#a3a5a8;">Scale Mode</span>
<div style="left:1059px;top:685px;width:319px;height:29px;background:#1d2229;border-radius:3px;"></div>
<span class="t" style="left:1064.9px;top:689.98px;font-size:14.5px;letter-spacing:0.27px;">fractional</span>
<svg style="left:1361px;top:692.5px;" width="14" height="14" viewBox="0 0 16 16"><path d="M4 6.2l4 4 4-4" fill="none" stroke="#e0e0e0" stroke-width="2" stroke-linecap="round" stroke-linejoin="round"/></svg>
<div style="left:728px;top:715px;width:650px;height:24px;background:#272c35;"></div>
<span class="t" style="left:730.4px;top:715.98px;font-size:14.5px;letter-spacing:0.12px;font-weight:700;color:#dfe0e2;">Handheld</span>
<span class="t" style="left:747.9px;top:743.28px;font-size:14.5px;letter-spacing:0.42px;color:#a3a5a8;">Orientation</span>
<div style="left:1059px;top:739.5px;width:319px;height:28.5px;background:#1d2229;border-radius:3px;"></div>
<span class="t" style="left:1064.9px;top:743.98px;font-size:14.5px;letter-spacing:-0.11px;">Landscape</span>
<svg style="left:1361px;top:746.5px;" width="14" height="14" viewBox="0 0 16 16"><path d="M4 6.2l4 4 4-4" fill="none" stroke="#e0e0e0" stroke-width="2" stroke-linecap="round" stroke-linejoin="round"/></svg>
<div style="left:728px;top:768.5px;width:650px;height:24.5px;background:#272c35;"></div>
<span class="t" style="left:730.4px;top:769.98px;font-size:14.5px;letter-spacing:-0.56px;font-weight:700;color:#dfe0e2;">V-Sync</span>
<span class="t" style="left:747.9px;top:797.48px;font-size:14.5px;letter-spacing:-0.2px;color:#a3a5a8;">V-Sync Mode</span>
<div style="left:1059px;top:793px;width:319px;height:29.5px;background:#1d2229;border-radius:3px;"></div>
<span class="t" style="left:1064.9px;top:797.98px;font-size:14.5px;letter-spacing:0.04px;">Enabled</span>
<svg style="left:1361px;top:800.5px;" width="14" height="14" viewBox="0 0 16 16"><path d="M4 6.2l4 4 4-4" fill="none" stroke="#e0e0e0" stroke-width="2" stroke-linecap="round" stroke-linejoin="round"/></svg>
<div style="left:936px;top:839px;width:48px;height:30px;background:#252b34;border-radius:3px;border:2px solid #70bafa;box-sizing:border-box;"></div>
<span class="t" style="left:942.4px;top:843.98px;font-size:14.5px;letter-spacing:-0.41px;color:#e6e7e9;">Close</span>
<svg style="left:0;top:0" width="1920" height="1032" viewBox="0 0 1920 1032"><g fill="none" stroke="#ff0000" stroke-linecap="round" stroke-linejoin="round"><path stroke-width="4.500" d="M54 57.500H129"/><path stroke-width="4" d="M64.500 86H155l10-1.200 12-.300"/><path stroke-width="4" d="M542 401.500H599"/><path stroke-width="6" d="M446 85L455 97.500l6 12.500 6.500 12.500 8.250 12.500 8 12.500 10 12.500 11.250 12.500 10 12.500 5.500 8.500"/><path stroke-width="5" d="M524.500 161.200v27l-3.500 5"/><path stroke-width="5" d="M496 180l12 5 12 7"/></g><g fill="none" stroke="#ea1c1c" stroke-linecap="round" stroke-width="4.300"><path d="M1031 292h91"/><path d="M1034 323.500c14 1.300 30 1.500 46 1.300h35.500"/></g></svg>
</div></body></html>
